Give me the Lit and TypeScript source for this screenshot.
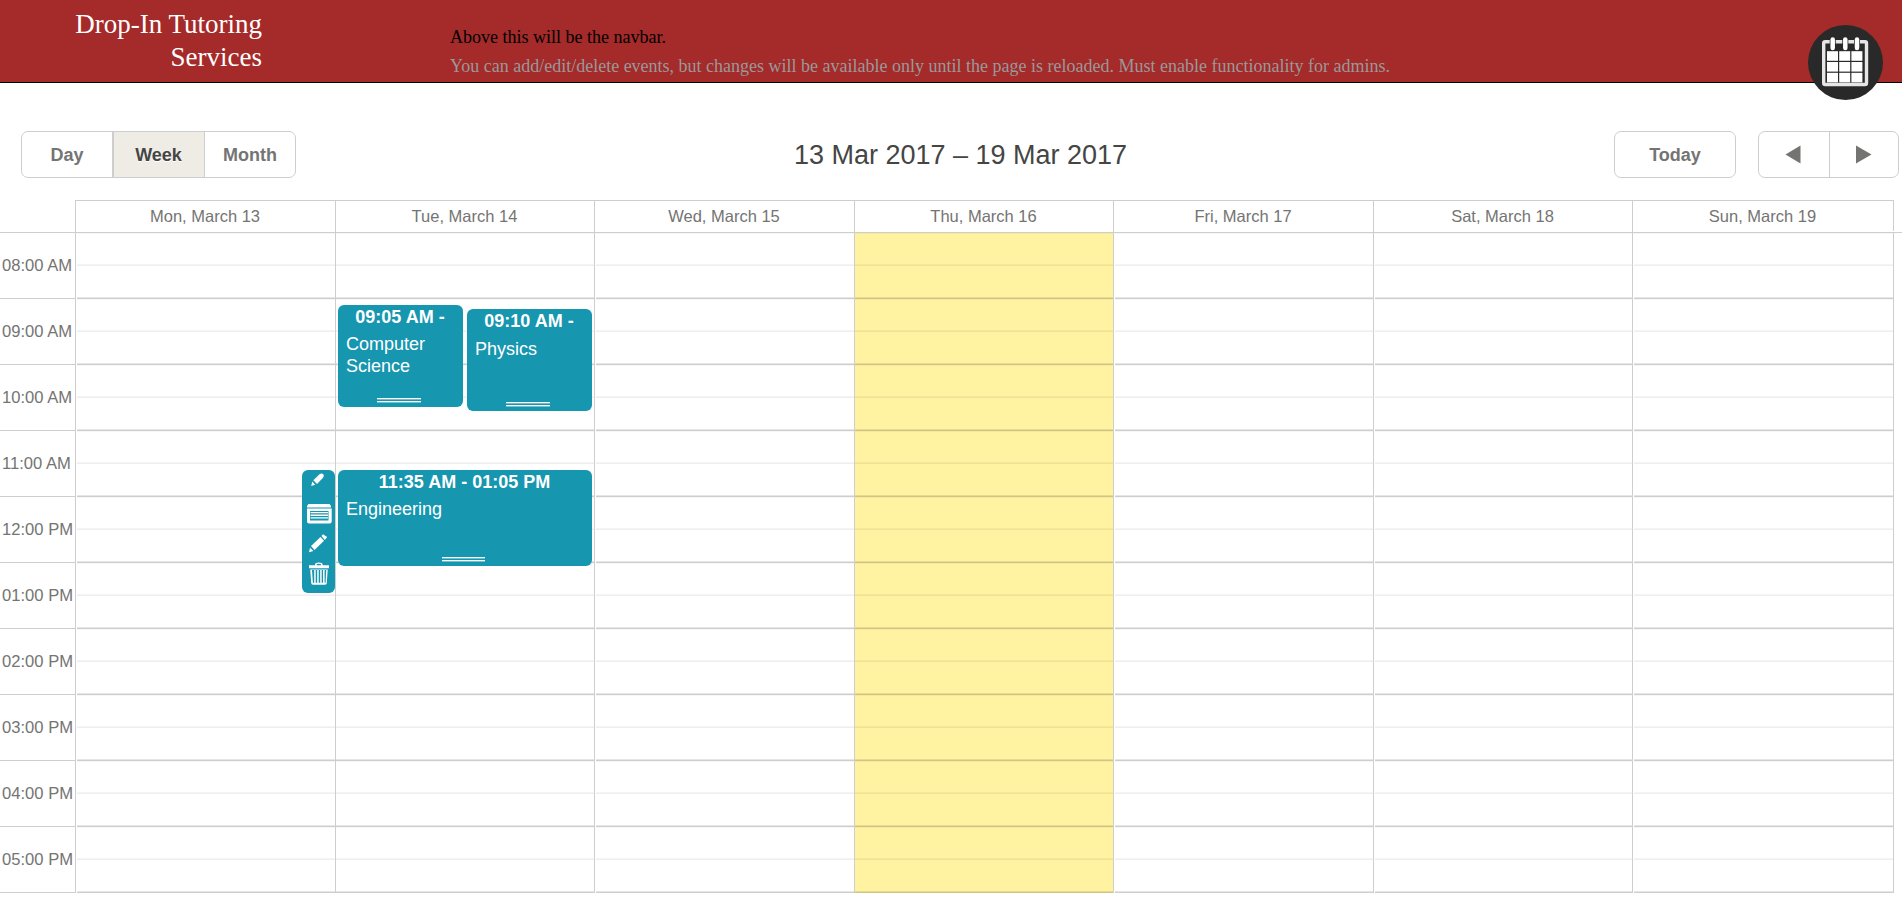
import { LitElement, html, css, svg } from "lit";
import { customElement } from "lit/decorators.js";

const DAYS = ["Mon, March 13", "Tue, March 14", "Wed, March 15", "Thu, March 16", "Fri, March 17", "Sat, March 18", "Sun, March 19"];
const HOURS = ["08:00 AM", "09:00 AM", "10:00 AM", "11:00 AM", "12:00 PM", "01:00 PM", "02:00 PM", "03:00 PM", "04:00 PM", "05:00 PM"];
const TODAY = 3;

interface CalEvent { time: string; title: string; left: number; top: number; width: number; height: number; grip: number; gap: number; }
// Offsets are relative to the day column and the start of the visible hours.
const EVENTS: CalEvent[] = [
  { time: "09:05 AM -", title: "Computer Science", left: 2, top: 72, width: 125, height: 102, grip: 44, gap: 5 },
  { time: "09:10 AM -", title: "Physics", left: 131, top: 76, width: 125, height: 102, grip: 44, gap: 6 },
  { time: "11:35 AM - 01:05 PM", title: "Engineering", left: 2, top: 237, width: 254, height: 96, grip: 43, gap: 5 },
];

@customElement("app-root")
export class AppRoot extends LitElement {
  static styles = css`
    :host { display: block; height: 924px; overflow: hidden; background: #fff; font-family: "Liberation Sans", Arial, sans-serif; color: #747473; }
    * { box-sizing: border-box; }
    .banner { position: relative; display: flex; height: 83px; background: #a52a2a; border-bottom: 1px solid #000; font-family: "Liberation Serif", "Times New Roman", serif; }
    .brand { width: 262px; padding-top: 8px; text-align: right; color: #fff; font-size: 27px; line-height: 33px; white-space: nowrap; }
    .notes { margin-left: 188px; padding-top: 23px; font-size: 18px; line-height: 29px; color: #999; white-space: nowrap; }
    .lead { color: #000; }
    .badge { position: absolute; left: 1808px; top: 25px; width: 75px; height: 75px; }
    .bar { display: grid; grid-template-columns: 275px 1fr 122px 22px 141px; grid-template-rows: 47px; height: 47px; margin: 48px 3px 0 21px; }
    .group, .today { display: flex; border: 1px solid #cecece; border-radius: 7px; overflow: hidden; font-weight: bold; font-size: 18px; line-height: 46px; text-align: center; }
    .tab { flex: 1; }
    .week { background: #efece6; color: #454544; border-left: 2px solid #cecece; border-right: 1px solid #cecece; flex: 0 0 93px; padding-right: 1px; text-shadow: 0 1px 0 #fff; }
    .range { font-size: 27px; line-height: 48px; text-align: center; color: #454544; padding-left: 11px; }
    .today { justify-content: center; }
    .nav { grid-column: 5; display: flex; border: 1px solid #cecece; border-radius: 7px; }
    .arrow { flex: 1; display: flex; align-items: center; justify-content: center; padding-right: 1px; }
    .arrow + .arrow { border-left: 1px solid #cecece; padding-right: 0; }
    .heads { display: grid; grid-template-columns: 260px 259px 260px 259px 260px 259px 261px; width: 1819px; height: 31px; margin: 22px 0 0 75px; border-top: 1px solid #cecece; border-right: 1px solid #cecece; }
    .head { border-left: 1px solid #cecece; padding-right: 1px; font-size: 16.5px; line-height: 31px; text-align: center; }
    .rule { height: 1px; background: #cecece; margin-top: 1px; }
    .body { display: grid; grid-template-columns: 76px 260px 259px 260px 259px 260px 259px 261px; height: 660px; width: 1894px; }
    .hours { border-right: 1px solid #cecece; }
    .hour { height: 66px; border-bottom: 1px solid #cecece; font-size: 16.600px; line-height: 65px; padding-left: 2px; white-space: nowrap; }
    .day { position: relative; height: 660px; border-right: 1px solid #cecece; padding-left: 1px; }
    .day.flush { padding-left: 0; }
    .slots { height: 660px; background: repeating-linear-gradient(to bottom, #f6f6f6 0 1px, transparent 1px 31px, #f5f5f5 31px 32px, #eeeeee 32px 33px, transparent 33px 64px, #e6e6e6 64px 65px, #cecece 65px 66px); }
    .day.current { background: #fff3a1; }
    .current .slots { background: repeating-linear-gradient(to bottom, #f6e99b 0 1px, transparent 1px 31px, #f4e89a 31px 32px, #ede296 32px 33px, transparent 33px 64px, #e6db91 64px 65px, #d0c683 65px 66px); }
    .event { position: absolute; z-index: 1; border-radius: 6px; background: #1796b0; color: #fff; overflow: hidden; }
    .time { height: 24px; padding: 1px 1px 0 0; text-align: center; font-weight: bold; font-size: 18px; line-height: 23px; white-space: nowrap; }
    .title { padding: 0 8px; font-size: 18px; line-height: 22px; }
    .grip { position: absolute; bottom: 4px; left: calc(50% - 23.5px); height: 5px; background: linear-gradient(#fff 0 1px, #70bfce 1px 2px, #1796b0 2px 3px, #fff 3px 4px, #70bfce 4px 5px); }
    .menu { position: absolute; z-index: 2; left: 226px; top: 237px; width: 33px; height: 123px; border-radius: 6px; background: #1796b0; }
    svg { display: block; }
  `;

  private event(e: CalEvent) {
    return html`<div class="event" style="left:${e.left}px;top:${e.top}px;width:${e.width}px;height:${e.height}px">
      <div class="time">${e.time}</div>
      <div class="title" style="padding-top:${e.gap - 1}px">${e.title}</div>
      <div class="grip" style="width:${e.grip}px"></div>
    </div>`;
  }

  private menu() {
    return html`<svg class="menu" viewBox="0 0 33 123" fill="#fff">
      <path d="M9.2 15.9 10.3 11.6 13.2 14.7Z" />
      <path d="M11.4 10.2 17.2 4.4Q18.6 3.5 20 3.6L21.6 4.5Q22.2 6.4 21 7.8L15 14Z" />
      <path d="M6.5 34h21l1.5 2v1.5H5V36z" />
      <path fill-rule="evenodd" d="M5 38.5h24.7v13q0 2-2 2H7q-2 0-2-2zM8 41v9.5h18.5V41z" />
      <path d="M8.5 42h17.5v1.3h-17.5zM8.5 44.6h17.5V46h-17.5zM8.5 47.3h17.5v1.3h-17.5z" />
      <path d="M7 82.2 8 77.8 11.4 81Z" />
      <path d="M9 76 18.5 67 22 70.8 12.5 80Z" />
      <path d="M19.5 66 21 64.2 25.2 67 22.8 70Z" />
      <path d="M13 96v-1.500q0-2 3.800-2t3.800 2V96h-1.500v-1.200q0-1-2.300-1t-2.300 1V96z" />
      <path d="M7 95.200h20v3H7z" />
      <path fill-rule="evenodd" d="M8.200 99.400h17.500L24.800 113q-.1 1.800-1.800 1.800H11q-1.700 0-1.800-1.800zM10 100l.9 12.800h1.300V100zM13.700 100v12.800h1.500V100zM16.700 100v12.800h1.500V100zM19.700 100v12.800h1.300V100zM22.600 100v12.800h1L24.200 100z" />
    </svg>`;
  }

  render() {
    return html`
      <header class="banner">
        <div class="brand">Drop-In Tutoring<br />Services</div>
        <div class="notes">
          <div class="lead">Above this will be the navbar.</div>
          <div>You can add/edit/delete events, but changes will be available only until the page is reloaded. Must enable functionality for admins.</div>
        </div>
        <svg class="badge" viewBox="0 0 75 75">
          <circle cx="37.5" cy="37.5" r="37.5" fill="#292929" />
          <rect x="15.7" y="16.7" width="42.8" height="42.8" rx="1.5" fill="none" stroke="#e6e6e6" stroke-width="3.4" />
          ${[0, 1, 2].map((r) => [0, 1, 2].map((c) => svg`<rect x=${19 + c * 12.2} y=${26.2 + r * 10.8} width="11" height="9.6" fill="#fff" />`))}
          ${[24.7, 37.3, 49].map((x) => svg`<path d="M${x} 13v12" stroke="#292929" stroke-width="6" /><path d="M${x} 14.5v8.5" stroke="#fff" stroke-width="4.5" stroke-linecap="round" />`)}
        </svg>
      </header>
      <div class="bar">
        <div class="group"><span class="tab">Day</span><span class="week">Week</span><span class="tab">Month</span></div>
        <div class="range">13 Mar 2017 – 19 Mar 2017</div>
        <div class="today">Today</div>
        <div class="nav">
          <div class="arrow"><svg width="17" height="19" viewBox="0 0 17 19"><path d="M0.5 9.5 15.5 0.5v18z" fill="#747473" /></svg></div>
          <div class="arrow"><svg width="17" height="19" viewBox="0 0 17 19"><path d="M16.5 9.5 1 0.5v18z" fill="#747473" /></svg></div>
        </div>
      </div>
      <div class="heads">${DAYS.map((d) => html`<div class="head">${d}</div>`)}</div>
      <div class="rule"></div>
      <div class="body">
        <div class="hours">${HOURS.map((h) => html`<div class="hour">${h}</div>`)}</div>
        ${DAYS.map((_, i) => html`<div class="day ${i === 1 || i === TODAY ? "flush" : ""} ${i === TODAY ? "current" : ""}">
          <div class="slots"></div>
          ${i === 1 ? EVENTS.map((e) => this.event(e)) : ""}
          ${i === 0 ? this.menu() : ""}
        </div>`)}
      </div>`;
  }
}
